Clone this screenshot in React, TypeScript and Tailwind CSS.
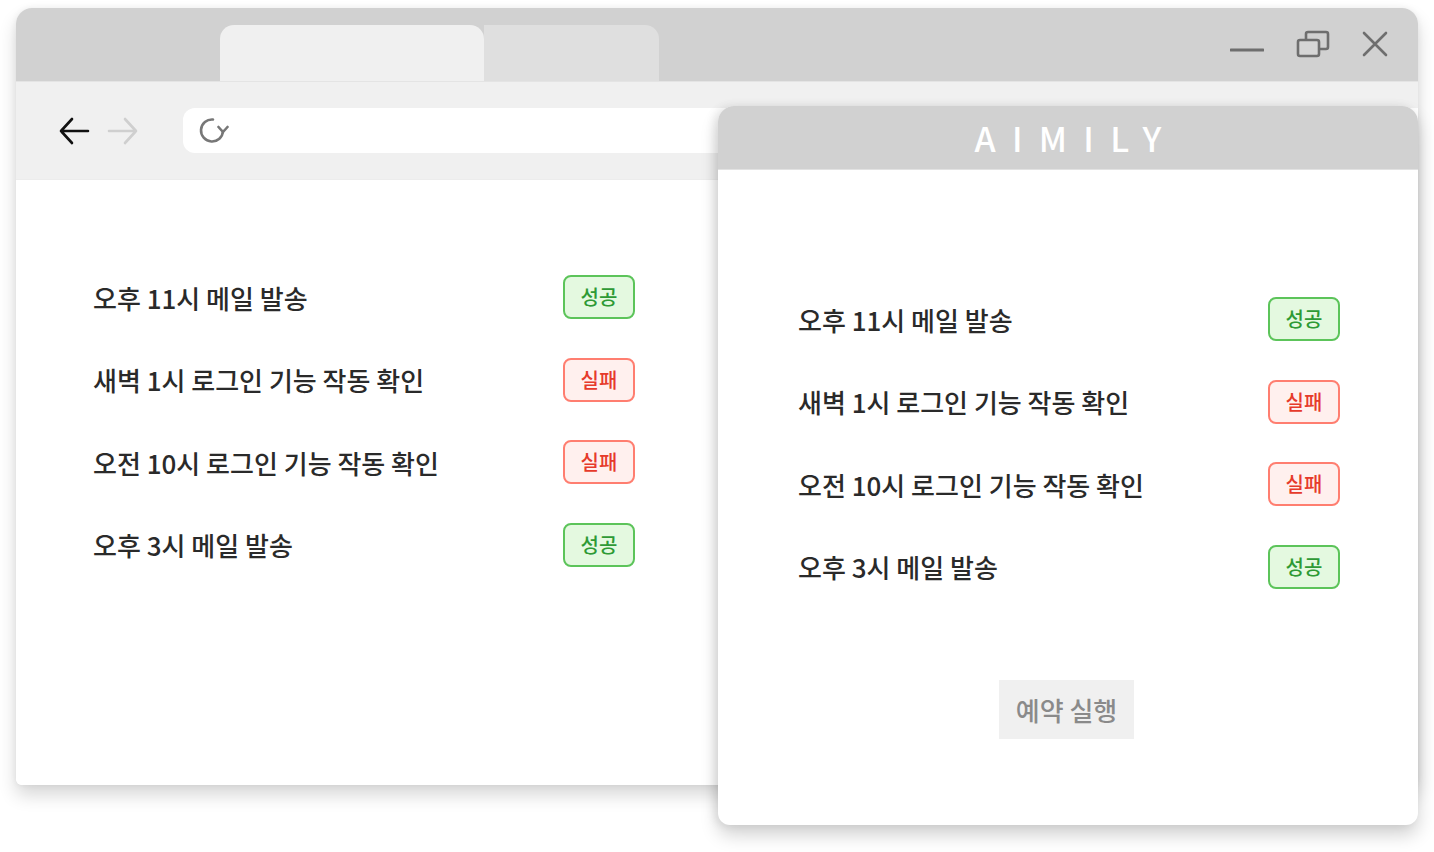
import React from 'react'

type Status = 'success' | 'fail'

interface Task {
  label: string
  status: Status
}

const tasks: Task[] = [
  { label: '오후 11시 메일 발송', status: 'success' },
  { label: '새벽 1시 로그인 기능 작동 확인', status: 'fail' },
  { label: '오전 10시 로그인 기능 작동 확인', status: 'fail' },
  { label: '오후 3시 메일 발송', status: 'success' },
]

const StatusBadge: React.FC<{ status: Status }> = ({ status }) => {
  if (status === 'success') {
    return (
      <span className="flex h-[44px] w-[72px] items-center justify-center rounded-[8px] border-2 border-[#5cc45a] bg-[#e4f9e0] text-[20px] font-medium text-[#2e9a35]">
        성공
      </span>
    )
  }
  return (
    <span className="flex h-[44px] w-[72px] items-center justify-center rounded-[8px] border-2 border-[#ff7e70] bg-[#fff0ee] text-[20px] font-medium text-[#e63a2b]">
      실패
    </span>
  )
}

const TaskList: React.FC = () => (
  <div className="flex flex-col gap-[38.5px]">
    {tasks.map((task) => (
      <div key={task.label} className="flex h-[44px] items-center justify-between">
        <span className="text-[26px] font-medium text-[#2a2a2a]">{task.label}</span>
        <StatusBadge status={task.status} />
      </div>
    ))}
  </div>
)

const WindowControls: React.FC = () => (
  <div className="mr-[30px] flex items-center gap-[32px] self-center pb-[2px]">
    <svg width="34" height="34" viewBox="0 0 34 34">
      <line x1="1" y1="23" x2="33" y2="23" stroke="#6e6e6e" strokeWidth="3" strokeLinecap="round" />
    </svg>
    <svg width="34" height="28" viewBox="0 0 34 28">
      <rect x="10" y="2" width="22" height="17" rx="2" fill="none" stroke="#6e6e6e" strokeWidth="2.6" />
      <rect x="2" y="10" width="21" height="16" rx="2" fill="#d6d6d6" stroke="#6e6e6e" strokeWidth="2.6" />
    </svg>
    <svg width="26" height="26" viewBox="0 0 26 26">
      <path d="M2 2 L24 24 M24 2 L2 24" stroke="#6e6e6e" strokeWidth="2.6" strokeLinecap="round" />
    </svg>
  </div>
)

export default function App() {
  return (
    <div
      className="relative h-[852px] w-[1434px] overflow-hidden bg-white pl-[16px] pt-[8px]"
      style={{ fontFamily: '"Noto Sans CJK KR", "Noto Sans", sans-serif' }}
    >
      {/* browser window */}
      <div className="flex h-[777px] w-[1402px] flex-col overflow-hidden rounded-t-[16px] rounded-b-[6px] bg-white shadow-[0_10px_18px_rgba(0,0,0,0.16),0_0_6px_rgba(0,0,0,0.06)]">
        <div className="flex h-[73px] items-end bg-[#d1d1d1] pl-[204px]">
          <div className="h-[56px] w-[264px] rounded-t-[14px] bg-[#f0f0f0]" />
          <div className="h-[56px] w-[175px] rounded-tr-[14px] bg-[#dfdfdf]" />
          <div className="ml-auto flex h-full">
            <WindowControls />
          </div>
        </div>
        <div className="flex h-[98px] items-center border-t border-[#e4e4e4] bg-[#f0f0f0] pl-[42px]">
          <svg width="32" height="30" viewBox="0 0 32 30">
            <path d="M3 15 H30 M14 3 L3 15 L14 27" fill="none" stroke="#111" strokeWidth="2.6" strokeLinecap="round" strokeLinejoin="round" />
          </svg>
          <svg width="32" height="30" viewBox="0 0 32 30" className="ml-[17px]">
            <path d="M2 15 H29 M18 3 L29 15 L18 27" fill="none" stroke="#cfcfcf" strokeWidth="2.6" strokeLinecap="round" strokeLinejoin="round" />
          </svg>
          <div className="ml-[44px] flex h-[45px] flex-1 items-center rounded-l-[12px] bg-white pl-[14px]">
            <svg width="32" height="30" viewBox="0 0 32 30">
              <path d="M16 3.5 A11 11 0 1 0 26 15" fill="none" stroke="#777" strokeWidth="2.6" strokeLinecap="round" />
              <path d="M21.5 11 L26 16 L30.5 11" fill="none" stroke="#777" strokeWidth="2.6" strokeLinecap="round" strokeLinejoin="round" />
            </svg>
          </div>
        </div>
        <div className="flex-1 border-t border-[#ececec] bg-white pl-[77px] pt-[95px]">
          <div className="w-[542px]">
            <TaskList />
          </div>
        </div>
      </div>

      {/* popup window */}
      <div className="absolute left-[718px] top-[106px] flex h-[719px] w-[700px] flex-col overflow-hidden rounded-t-[16px] rounded-b-[12px] bg-white shadow-[0_10px_18px_rgba(0,0,0,0.18),-4px_0_10px_rgba(0,0,0,0.08)]">
        <div className="flex h-[64px] items-center justify-center border-b border-[#e2e2e2] bg-[#d1d1d1] pl-[16px]">
          <span className="text-[34px] font-medium leading-none tracking-[0.48em] text-white">AIMILY</span>
        </div>
        <div className="flex flex-1 flex-col pl-[80px] pr-[78px] pt-[127px]">
          <TaskList />
          <div className="mt-[91px] flex justify-center pr-[5px]">
            <button className="flex h-[59px] w-[135px] items-center justify-center bg-[#f0f0f0] text-[26px] font-medium text-[#8a8a8a]">
              예약 실행
            </button>
          </div>
        </div>
      </div>
    </div>
  )
}
